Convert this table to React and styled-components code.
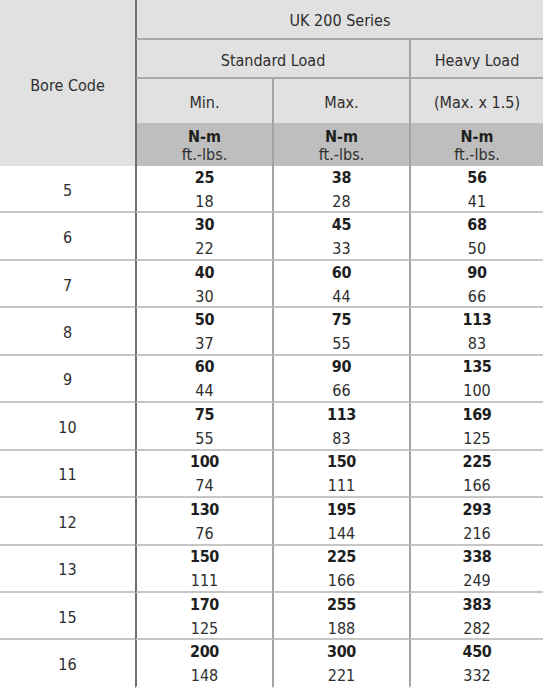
import React from 'react'
import styled, { createGlobalStyle } from 'styled-components'

const GlobalStyle = createGlobalStyle`
    html, body {
        margin: 0;
        padding: 0;
        background: #ffffff;
    }
    body {
        font-family: "DejaVu Sans Condensed", "Liberation Sans", sans-serif;
        color: #2e2e2e;
    }
`

const rows = [
    ['5', [25, 18], [38, 28], [56, 41]],
    ['6', [30, 22], [45, 33], [68, 50]],
    ['7', [40, 30], [60, 44], [90, 66]],
    ['8', [50, 37], [75, 55], [113, 83]],
    ['9', [60, 44], [90, 66], [135, 100]],
    ['10', [75, 55], [113, 83], [169, 125]],
    ['11', [100, 74], [150, 111], [225, 166]],
    ['12', [130, 76], [195, 144], [293, 216]],
    ['13', [150, 111], [225, 166], [338, 249]],
    ['15', [170, 125], [255, 188], [383, 282]],
    ['16', [200, 148], [300, 221], [450, 332]],
]

function App() {
    return (
        <>
            <GlobalStyle />
            <Grid>
                <BoreHead>Bore Code</BoreHead>
                <Head col="2 / 5" line>UK 200 Series</Head>
                <Head col="2 / 4" line>Standard Load</Head>
                <Head col="4 / 5" line>Heavy Load</Head>
                <Head col="2 / 3">Min.</Head>
                <Head col="3 / 4">Max.</Head>
                <Head col="4 / 5">(Max. x 1.5)</Head>
                {[2, 3, 4].map(c => (
                    <Units key={c} col={`${c} / ${c + 1}`}>
                        <b>N-m</b>
                        <span>ft.-lbs.</span>
                    </Units>
                ))}
                {rows.map(([code, ...vals], r) => {
                    const last = r === rows.length - 1
                    return (
                        <React.Fragment key={code}>
                            <BoreCell last={last}>{code}</BoreCell>
                            {vals.map(([nm, ft], i) => (
                                <ValueCell key={i} last={last} first={i === 0}>
                                    <b>{nm}</b>
                                    <span>{ft}</span>
                                </ValueCell>
                            ))}
                        </React.Fragment>
                    )
                })}
            </Grid>
        </>
    )
}

export default App

const Grid = styled.div`
    display: grid;
    grid-template-columns: 135px 137px 137px 134px;
    grid-template-rows: 40px 39px 44px 43px repeat(11, 47.45px);
    width: 543px;
    font-size: 16px;
`

const BoreHead = styled.div`
    grid-column: 1 / 2;
    grid-row: 1 / 5;
    background: #e1e1e1;
    display: flex;
    align-items: center;
    justify-content: center;
    padding-top: 4px;
`

const Head = styled.div`
    grid-column: ${props => props.col};
    box-sizing: border-box;
    background: #e1e1e1;
    border-left: 2px solid ${props => props.col.startsWith('2') ? '#6f6f6f' : '#a4a4a4'};
    border-bottom: ${props => props.line ? '2px solid #a9a9a9' : 'none'};
    display: flex;
    align-items: center;
    justify-content: center;
    padding-top: ${props => props.line ? '3px' : '2px'};
`

const Units = styled.div`
    grid-column: ${props => props.col};
    box-sizing: border-box;
    background: #bebebe;
    border-left: 2px solid ${props => props.col.startsWith('2') ? '#6f6f6f' : '#a4a4a4'};
    display: flex;
    flex-direction: column;
    align-items: center;
    justify-content: center;
    line-height: 18px;
    padding-top: 3px;
    b {
        color: #1e1e1e;
    }
`

const BoreCell = styled.div`
    box-sizing: border-box;
    border-bottom: 2px solid ${props => props.last ? 'transparent' : '#c6c6c6'};
    display: flex;
    align-items: center;
    justify-content: center;
    padding-top: 3px;
`

const ValueCell = styled.div`
    box-sizing: border-box;
    border-left: 2px solid ${props => props.first ? '#6f6f6f' : '#a4a4a4'};
    border-bottom: 2px solid ${props => props.last ? 'transparent' : '#c6c6c6'};
    display: flex;
    flex-direction: column;
    align-items: center;
    justify-content: center;
    line-height: 24px;
    padding-top: 2px;
    b {
        color: #1e1e1e;
        letter-spacing: -0.3px;
    }
`
